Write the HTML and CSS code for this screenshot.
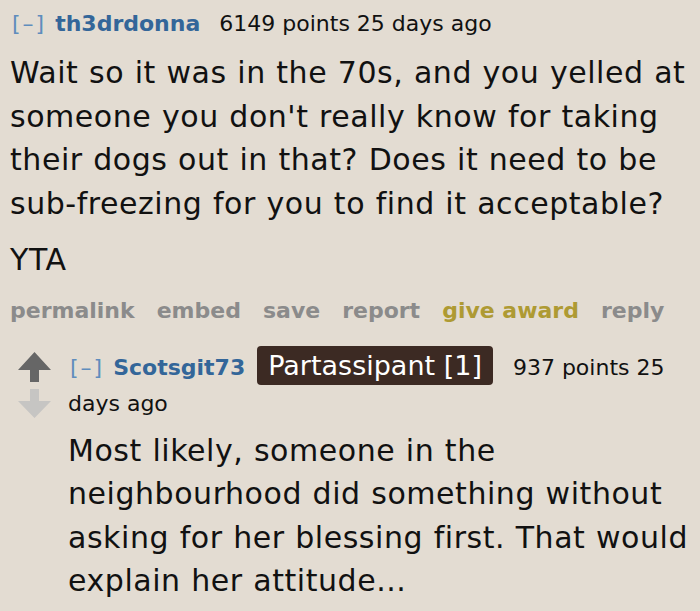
FILE: index.html
```html
<html><head><title>Comment thread</title>
<link rel="stylesheet" href="styles.css">
</head>
<body>
  <div class="comment">
    <div class="entry">
      <p class="tagline">
        <a class="expand">[–]</a>
        <a class="author">th3drdonna</a>
        <span class="score">6149 points</span> <span class="live-time">25 days ago</span>
      </p>
      <div class="md">
        <p>Wait so it was in the 70s, and you yelled at someone you don't really know for taking their dogs out in that? Does it need to be sub-freezing for you to find it acceptable?</p>
        <p>YTA</p>
      </div>
      <ul class="buttons">
        <li>permalink</li>
        <li>embed</li>
        <li>save</li>
        <li>report</li>
        <li class="award">give award</li>
        <li>reply</li>
      </ul>
    </div>

    <div class="child">
      <div class="midcol">
        <svg class="arrow up" width="34" height="30" viewBox="0 0 34 30"><path d="M16.5 0 L33 18 L21 18 L21 30 L12 30 L12 18 L0 18 Z"/></svg>
        <svg class="arrow down" width="34" height="30" viewBox="0 0 34 30"><path d="M12 0 L21 0 L21 12 L33 12 L16.5 29 L0 12 L12 12 Z"/></svg>
      </div>
      <div class="entry">
        <p class="tagline">
          <a class="expand">[–]</a>
          <a class="author">Scotsgit73</a>
          <span class="flair">Partassipant [1]</span>
          <span class="score">937 points</span> <span class="live-time">25 days ago</span>
        </p>
        <div class="md">
          <p>Most likely, someone in the neighbourhood did something without asking for her blessing first. That would explain her attitude...</p>
        </div>
      </div>
    </div>
  </div>
</body>
</html>
```

FILE: styles.css
```css
body, html {
  margin: 0;
  padding: 0;
  background: #e3dcd2;
  color: #111;
  font-family: 'DejaVu Sans', Verdana, sans-serif;
  overflow: hidden;
}
.comment {
  padding: 4px 10px 0 10px;
}
.tagline {
  margin: 0;
  font-size: 22px;
  line-height: 40px;
  color: #111;
}
.expand {
  color: #5f8dbd;
  margin-left: 2px;
  margin-right: 2px;
  letter-spacing: 2px;
}
.author {
  color: #336699;
  font-weight: bold;
  margin-right: 12px;
}
.md {
  margin-top: 7px;
  font-size: 30px;
  line-height: 43.5px;
  letter-spacing: 0.55px;
  word-spacing: 0.5px;
}
.md p {
  margin: 0 0 13px 0;
}
.buttons {
  list-style: none;
  margin: 14px 0 0 0;
  padding: 0;
  display: flex;
  gap: 22px;
  font-size: 22px;
  font-weight: bold;
  color: #8b8b8b;
  line-height: 30px;
}
.buttons li {
  margin: 0;
}
.buttons .award {
  color: #ae9a33;
}
.child {
  display: flex;
  margin-top: 20px;
}
.midcol {
  width: 50px;
  display: flex;
  flex-direction: column;
  align-items: flex-start;
  padding-left: 8px;
  padding-top: 6px;
  gap: 7px;
}
.arrow.up {
  fill: #666;
}
.arrow.down {
  fill: #c6c5c3;
}
.child .entry {
  flex: 1;
}
.child .tagline {
  line-height: 36px;
}
.child .author {
  margin-right: 5px;
}
.flair {
  display: inline-block;
  background: #3c2a23;
  color: #fff;
  font-size: 27px;
  line-height: 39px;
  padding: 0 11px;
  border-radius: 4px;
  margin-right: 13px;
}
.child .md {
  margin-top: 7px;
}
.child .md p {
  margin: 0;
}
```
